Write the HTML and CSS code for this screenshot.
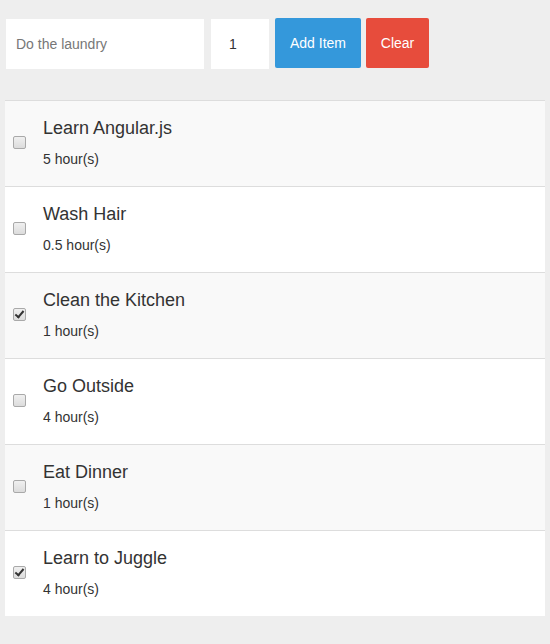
FILE: index.html
```html
<!DOCTYPE html>
<html lang="en">
<head>
<meta charset="utf-8">
<title>Todo</title>
<link rel="stylesheet" href="styles.css">
</head>
<body>
<form class="add-form">
  <input class="task-input" type="text" placeholder="Do the laundry">
  <input class="hours-input" type="text" value="1">
  <button class="btn btn-add" type="button">Add Item</button>
  <button class="btn btn-clear" type="button">Clear</button>
</form>
<ul class="task-list">
  <li class="task">
    <input class="check" type="checkbox">
    <div class="task-body">
      <div class="task-title">Learn Angular.js</div>
      <div class="task-hours">5 hour(s)</div>
    </div>
  </li>
  <li class="task">
    <input class="check" type="checkbox">
    <div class="task-body">
      <div class="task-title">Wash Hair</div>
      <div class="task-hours">0.5 hour(s)</div>
    </div>
  </li>
  <li class="task">
    <input class="check" type="checkbox" checked>
    <div class="task-body">
      <div class="task-title">Clean the Kitchen</div>
      <div class="task-hours">1 hour(s)</div>
    </div>
  </li>
  <li class="task">
    <input class="check" type="checkbox">
    <div class="task-body">
      <div class="task-title">Go Outside</div>
      <div class="task-hours">4 hour(s)</div>
    </div>
  </li>
  <li class="task">
    <input class="check" type="checkbox">
    <div class="task-body">
      <div class="task-title">Eat Dinner</div>
      <div class="task-hours">1 hour(s)</div>
    </div>
  </li>
  <li class="task">
    <input class="check" type="checkbox" checked>
    <div class="task-body">
      <div class="task-title">Learn to Juggle</div>
      <div class="task-hours">4 hour(s)</div>
    </div>
  </li>
</ul>
</body>
</html>
```

FILE: styles.css
```css
html, body {
  margin: 0;
  padding: 0;
  background: #eeeeee;
  font-family: "Liberation Sans", Arial, sans-serif;
  color: #333333;
}

.add-form {
  display: flex;
  align-items: flex-start;
  padding: 18px 0 0 6px;
  margin: 0;
}

.task-input,
.hours-input {
  box-sizing: border-box;
  height: 50px;
  margin-top: 1px;
  border: none;
  outline: none;
  background: #ffffff;
  font-family: "Liberation Sans", Arial, sans-serif;
  font-size: 14px;
  color: #333333;
}

.task-input {
  width: 198px;
  padding: 0 10px;
}

.task-input::placeholder {
  color: #777777;
}

.hours-input {
  width: 58px;
  margin-left: 7px;
  padding: 0 0 0 18px;
}

.btn {
  box-sizing: border-box;
  height: 50px;
  border: none;
  border-radius: 2px;
  color: #ffffff;
  font-family: "Liberation Sans", Arial, sans-serif;
  font-size: 14px;
  padding: 0;
  cursor: pointer;
}

.btn-add {
  width: 86px;
  margin-left: 6px;
  background: #3498db;
}

.btn-clear {
  width: 63px;
  margin-left: 5px;
  background: #e74c3c;
}

.task-list {
  list-style: none;
  margin: 31px 5px 0 5px;
  padding: 0;
  width: 540px;
}

.task {
  display: flex;
  align-items: center;
  height: 85px;
  border-top: 1px solid #dddddd;
  background: #ffffff;
}

.task:nth-child(odd) {
  background: #f9f9f9;
}

.check {
  appearance: none;
  -webkit-appearance: none;
  box-sizing: border-box;
  width: 13px;
  height: 13px;
  margin: -2px 0 0 8px;
  border: 1px solid #a9a9a9;
  border-radius: 2px;
  background: linear-gradient(#f0f0f0, #dcdcdc);
  position: relative;
  flex: none;
}

.check:checked::after {
  content: "";
  position: absolute;
  left: 3px;
  top: 0px;
  width: 3px;
  height: 7px;
  border-right: 2px solid #333333;
  border-bottom: 2px solid #333333;
  transform: rotate(40deg);
}

.task-body {
  margin-left: 17px;
}

.task-title {
  font-size: 18px;
  line-height: 20px;
}

.task-hours {
  font-size: 14px;
  line-height: 20px;
  margin-top: 11px;
}
```
